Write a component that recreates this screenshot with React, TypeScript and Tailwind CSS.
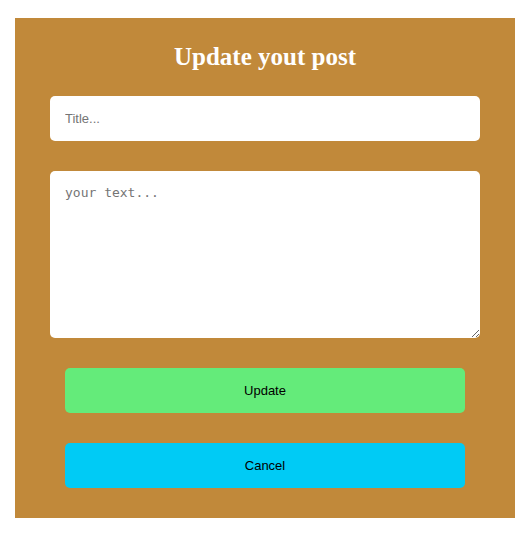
import React from "react";

const App: React.FC = () => {
  return (
    <div className="min-h-[534px] bg-white pl-[15px] pt-[18px]">
      <div className="w-[500px] h-[500px] bg-[#c1893a] flex flex-col items-center pt-[25px]">
        <h2 className="font-['Liberation_Serif',serif] font-bold text-[25px] leading-[28px] text-white">
          Update yout post
        </h2>

        <input
          type="text"
          placeholder="Title..."
          className="mt-[25px] w-[430px] h-[45px] bg-white rounded-[5px] px-[15px] font-['Liberation_Sans',Arial,sans-serif] text-[13px] placeholder:text-[#757575] outline-none"
        />

        <textarea
          placeholder="your text..."
          className="mt-[30px] w-[430px] h-[167px] bg-white rounded-[5px] px-[15px] py-[12px] font-['DejaVu_Sans_Mono',monospace] text-[13px] placeholder:text-[#757575] outline-none"
        />

        <button className="mt-[30px] w-[400px] h-[45px] bg-[#64eb7a] rounded-[5px] font-['Liberation_Sans',Arial,sans-serif] text-[13px] text-black">
          Update
        </button>

        <button className="mt-[30px] w-[400px] h-[45px] bg-[#00cbf5] rounded-[5px] font-['Liberation_Sans',Arial,sans-serif] text-[13px] text-black">
          Cancel
        </button>
      </div>
    </div>
  );
};

export default App;
